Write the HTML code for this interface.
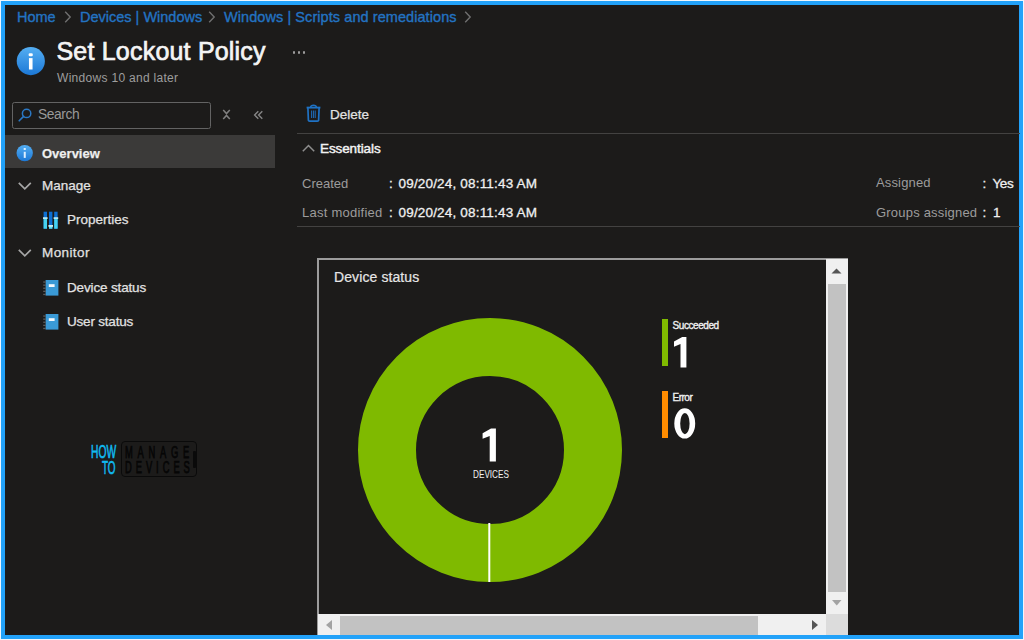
<!DOCTYPE html>
<html><head><meta charset="utf-8">
<style>
*{margin:0;padding:0;box-sizing:border-box}
html,body{width:1024px;height:640px;overflow:hidden;background:#eef6fd}
body{font-family:"Liberation Sans",sans-serif;position:relative}
#frame{position:absolute;left:1px;top:0.6px;width:1022px;height:638.4px;background:#22a2f9}
#app{position:absolute;left:5px;top:5px;width:1014px;height:630px;background:#1c1b1a}
.a{position:absolute;white-space:nowrap;line-height:1}
.bc{color:#2373c2;font-size:14.5px;-webkit-text-stroke:0.35px #2373c2}
.nav{color:#e2e2e2;font-size:13.5px;-webkit-text-stroke:0.25px #e2e2e2}
.lbl{color:#9c9c9c;font-size:13px}
.val{color:#f0f0f0;font-size:13.5px;-webkit-text-stroke:0.3px #f0f0f0;letter-spacing:0.05px}
svg{position:absolute;overflow:visible}
</style></head><body>
<div id="frame"></div>
<div id="app"></div>

<!-- breadcrumb -->
<div class="a bc" style="left:17px;top:10px">Home</div>
<svg style="left:64px;top:11px" width="8" height="12"><path d="M1.2 0.8 L6.2 6 L1.2 11.2" fill="none" stroke="#707070" stroke-width="1.4"/></svg>
<div class="a bc" style="left:80px;top:10px">Devices | Windows</div>
<svg style="left:208px;top:11px" width="8" height="12"><path d="M1.2 0.8 L6.2 6 L1.2 11.2" fill="none" stroke="#707070" stroke-width="1.4"/></svg>
<div class="a bc" style="left:224px;top:10px;letter-spacing:0.07px">Windows | Scripts and remediations</div>
<svg style="left:464px;top:11px" width="8" height="12"><path d="M1.2 0.8 L6.2 6 L1.2 11.2" fill="none" stroke="#707070" stroke-width="1.4"/></svg>

<!-- title -->
<svg style="left:16px;top:47px" width="29" height="29">
  <defs><linearGradient id="ig" x1="0" y1="0" x2="0" y2="1"><stop offset="0" stop-color="#54aef2"/><stop offset="1" stop-color="#1c78d6"/></linearGradient></defs>
  <circle cx="14.8" cy="14.1" r="14.1" fill="url(#ig)"/>
  <rect x="12.6" y="6.2" width="4.2" height="3" rx="1.3" fill="#fff"/>
  <rect x="12.95" y="11.1" width="3.6" height="11.4" fill="#fff"/>
</svg>
<div class="a" style="left:56.5px;top:39px;font-size:25px;color:#f4f4f4;letter-spacing:0.2px;-webkit-text-stroke:0.7px #f4f4f4">Set Lockout Policy</div>
<div class="a" style="left:293px;top:51.4px;width:13px;height:3px">
  <span style="position:absolute;left:0;top:0;width:2.2px;height:2.2px;border-radius:1px;background:#9c9c9c"></span>
  <span style="position:absolute;left:5px;top:0;width:2.2px;height:2.2px;border-radius:1px;background:#9c9c9c"></span>
  <span style="position:absolute;left:10px;top:0;width:2.2px;height:2.2px;border-radius:1px;background:#9c9c9c"></span>
</div>
<div class="a" style="left:57px;top:72px;font-size:12px;color:#9e9e9e;letter-spacing:0.3px">Windows 10 and later</div>

<!-- search -->
<div class="a" style="left:11.5px;top:101.5px;width:199px;height:27px;border:1.6px solid #636363;border-radius:2.5px"></div>
<svg style="left:18px;top:108px" width="14" height="14"><circle cx="8.6" cy="5.4" r="4.2" fill="none" stroke="#2a78c4" stroke-width="1.5"/><path d="M5.6 8.4 L1.2 12.8" stroke="#2a78c4" stroke-width="1.6" stroke-linecap="round"/></svg>
<div class="a lbl" style="left:38px;top:107.6px;font-size:13.8px;letter-spacing:-0.4px;color:#999">Search</div>
<svg style="left:222px;top:109px" width="9" height="11"><path d="M1.2 1 L4.5 4.6 L7.8 1 M1.2 10 L4.5 6.4 L7.8 10" fill="none" stroke="#808080" stroke-width="1.5"/></svg>
<svg style="left:253px;top:110px" width="11" height="10"><path d="M5.3 1.2 L1.6 5 L5.3 8.8 M9.3 1.2 L5.6 5 L9.3 8.8" fill="none" stroke="#858585" stroke-width="1.4"/></svg>

<!-- nav -->
<div class="a" style="left:5px;top:135px;width:270px;height:33px;background:#3b3a39"></div>
<svg style="left:16px;top:145px" width="17" height="17">
  <circle cx="8.7" cy="8.1" r="8.2" fill="url(#ig)"/>
  <rect x="7.5" y="3.1" width="2.5" height="1.9" rx="0.9" fill="#dcefff"/>
  <rect x="7.75" y="6.8" width="2" height="6.1" fill="#dcefff"/>
</svg>
<div class="a nav" style="left:42px;top:146.5px;font-size:13px;font-weight:bold;color:#f2f2f2">Overview</div>

<svg style="left:18px;top:182px" width="14" height="8"><path d="M0.8 0.8 L6.8 6.8 L12.8 0.8" fill="none" stroke="#a6a6a6" stroke-width="1.7"/></svg>
<div class="a nav" style="left:42px;top:178.6px">Manage</div>

<svg style="left:43px;top:211px" width="16" height="18">
  <rect x="0.6" y="0.7" width="3.4" height="17" fill="#0d6fd2"/>
  <rect x="6" y="0.7" width="3.4" height="17" fill="#0d6fd2"/>
  <rect x="11.2" y="0.7" width="3.4" height="17" fill="#0d6fd2"/>
  <rect x="0.6" y="7.5" width="3.4" height="10.2" fill="#46d2ee"/>
  <rect x="6" y="15" width="3.4" height="2.7" fill="#5fe0f0"/>
  <rect x="11.2" y="7.5" width="3.4" height="10.2" fill="#46d2ee"/>
  <rect x="0" y="6.2" width="4.6" height="1.8" fill="#b4e8f6"/>
  <rect x="5.4" y="14" width="4.6" height="1.8" fill="#c8eef6"/>
  <rect x="10.6" y="6.2" width="4.6" height="1.8" fill="#b4e8f6"/>
</svg>
<div class="a nav" style="left:67px;top:212.6px">Properties</div>

<svg style="left:18px;top:249px" width="14" height="8"><path d="M0.8 0.8 L6.8 6.8 L12.8 0.8" fill="none" stroke="#a6a6a6" stroke-width="1.7"/></svg>
<div class="a nav" style="left:42px;top:246.2px;letter-spacing:0.4px">Monitor</div>

<svg style="left:43px;top:280px" width="16" height="16">
  <rect x="2.6" y="0" width="12.8" height="15.6" fill="#3a9ad6"/>
  <rect x="0.2" y="1.4" width="2.6" height="1.3" fill="#5c5c5c"/><rect x="0.2" y="4.5" width="2.6" height="1.3" fill="#5c5c5c"/><rect x="0.2" y="7.6" width="2.6" height="1.3" fill="#5c5c5c"/><rect x="0.2" y="10.7" width="2.6" height="1.3" fill="#5c5c5c"/><rect x="0.2" y="13.8" width="2.6" height="1.3" fill="#5c5c5c"/>
  <rect x="5.8" y="4.2" width="5.8" height="2.8" fill="#f4f9fd"/>
</svg>
<div class="a nav" style="left:67px;top:280.6px;letter-spacing:-0.15px">Device status</div>

<svg style="left:43px;top:314px" width="16" height="16">
  <rect x="2.6" y="0" width="12.8" height="15.6" fill="#3a9ad6"/>
  <rect x="0.2" y="1.4" width="2.6" height="1.3" fill="#5c5c5c"/><rect x="0.2" y="4.5" width="2.6" height="1.3" fill="#5c5c5c"/><rect x="0.2" y="7.6" width="2.6" height="1.3" fill="#5c5c5c"/><rect x="0.2" y="10.7" width="2.6" height="1.3" fill="#5c5c5c"/><rect x="0.2" y="13.8" width="2.6" height="1.3" fill="#5c5c5c"/>
  <rect x="5.8" y="4.2" width="5.8" height="2.8" fill="#f4f9fd"/>
</svg>
<div class="a nav" style="left:67px;top:314.9px;letter-spacing:-0.2px">User status</div>

<!-- watermark logo -->
<div class="a" style="left:90.5px;top:443px;font-size:18px;color:#10bcf2;transform-origin:0 0;transform:scaleX(0.57);-webkit-text-stroke:0.6px #10bcf2">HOW</div>
<div class="a" style="left:102px;top:458.6px;font-size:18px;color:#10bcf2;transform-origin:0 0;transform:scaleX(0.55);-webkit-text-stroke:0.6px #10bcf2">TO</div>
<div class="a" style="left:121px;top:441px;width:76px;height:36px;border:1.6px solid #0a0a0a;border-radius:4px"></div>
<div class="a" style="left:193px;top:450.5px;width:3.2px;height:17px;background:#0a0a0a;border-radius:1px"></div>
<div class="a" style="left:125px;top:443.8px;font-size:17px;color:#060606;letter-spacing:8.6px;transform-origin:0 0;transform:scaleX(0.55);-webkit-text-stroke:0.75px #060606">MANAGE</div>
<div class="a" style="left:125px;top:459px;font-size:17px;color:#060606;letter-spacing:7.2px;transform-origin:0 0;transform:scaleX(0.55);-webkit-text-stroke:0.75px #060606">DEVICES</div>

<!-- command bar -->
<svg style="left:306px;top:104px" width="15" height="19">
  <path d="M4.6 3.2 Q4.8 1.2 7.5 1.2 Q10.2 1.2 10.4 3.2" fill="none" stroke="#1f72c4" stroke-width="1.5"/>
  <path d="M0.6 3.6 L14.4 3.6" stroke="#1f72c4" stroke-width="1.9"/>
  <path d="M1.9 4 L2.4 16.4 Q2.5 17.1 3.6 17.1 L11.4 17.1 Q12.5 17.1 12.6 16.4 L13.1 4" fill="none" stroke="#1f72c4" stroke-width="1.7"/>
  <path d="M5.6 6.5 V14 M7.4 6.5 V14 M9.2 6.5 V14" stroke="#1f72c4" stroke-width="0.95"/>
</svg>
<div class="a nav" style="left:330px;top:108px">Delete</div>
<div class="a" style="left:296.5px;top:132.8px;width:723px;height:1.4px;background:#434241"></div>

<svg style="left:302px;top:144px" width="13" height="8"><path d="M0.8 7.2 L6.5 1.5 L12.2 7.2" fill="none" stroke="#8e8e8e" stroke-width="1.5"/></svg>
<div class="a" style="left:320px;top:142.2px;font-size:13.5px;color:#f2f2f2;letter-spacing:-0.1px;-webkit-text-stroke:0.45px #f2f2f2">Essentials</div>

<div class="a lbl" style="left:302px;top:176.8px">Created</div>
<div class="a val" style="left:389px;top:176.5px">:</div><div class="a val" style="left:398.5px;top:176.5px;letter-spacing:0.18px">09/20/24, 08:11:43 AM</div>
<div class="a lbl" style="left:302px;top:205.9px;letter-spacing:0.25px">Last modified</div>
<div class="a val" style="left:389px;top:205.5px">:</div><div class="a val" style="left:398.5px;top:205.5px;letter-spacing:0.18px">09/20/24, 08:11:43 AM</div>
<div class="a lbl" style="left:876px;top:176.4px;letter-spacing:0.15px">Assigned</div>
<div class="a val" style="left:982.5px;top:176.5px">:</div><div class="a val" style="left:992.5px;top:176.5px;letter-spacing:-0.4px">Yes</div>
<div class="a lbl" style="left:876px;top:206px;letter-spacing:0.2px">Groups assigned</div>
<div class="a val" style="left:982.5px;top:205.5px">:</div><div class="a val" style="left:993px;top:205.5px">1</div>
<div class="a" style="left:296.5px;top:225.8px;width:723px;height:1.4px;background:#434241"></div>

<!-- chart panel -->
<div class="a" style="left:317px;top:258px;width:531px;height:377px;border-left:2px solid #9c9c9c;border-top:2px solid #9c9c9c"></div>
<div class="a" style="left:334px;top:269.5px;font-size:14px;color:#e6e6e6;letter-spacing:0.1px;-webkit-text-stroke:0.2px #e6e6e6">Device status</div>

<svg style="left:0;top:0" width="1024" height="640">
  <circle cx="490" cy="450" r="103" fill="none" stroke="#7fba00" stroke-width="58"/>
  <path d="M489.3 523 V582" stroke="#ffffff" stroke-width="2"/>
</svg>
<svg style="left:0;top:0" width="1024" height="640">
  <path d="M495.9 428.5 L495.9 461.6 L489.7 461.6 L489.7 436 L482.6 438.8 L482.6 433.2 L491 428.5 Z" fill="#fff"/>
  <path d="M686.4 337 L686.4 367.6 L680.5 367.6 L680.5 344 L674 346.8 L674 341.4 L682.2 337 Z" fill="#fff"/>
  <path fill-rule="evenodd" fill="#fff" d="M684.75 408.3 A10.45 15.15 0 1 1 684.75 438.6 A10.45 15.15 0 1 1 684.75 408.3 Z M684.9 412.9 A4.7 10.65 0 1 0 684.9 434.2 A4.7 10.65 0 1 0 684.9 412.9 Z"/>
</svg>
<div class="a" style="left:472.5px;top:468.5px;font-size:10.5px;color:#f0f0f0;transform-origin:0 0;transform:scaleX(0.78)">DEVICES</div>

<div class="a" style="left:662px;top:319px;width:5.5px;height:47px;background:#7fba00"></div>
<div class="a" style="left:672.5px;top:321px;font-size:10px;color:#f0f0f0;letter-spacing:-0.42px;-webkit-text-stroke:0.35px #f0f0f0">Succeeded</div>
<div class="a" style="left:662px;top:390.5px;width:5.5px;height:47px;background:#ff8c00"></div>
<div class="a" style="left:672.5px;top:392.8px;font-size:10px;color:#f0f0f0;letter-spacing:-0.5px;-webkit-text-stroke:0.35px #f0f0f0">Error</div>

<!-- scrollbars -->
<div class="a" style="left:826px;top:259px;width:22px;height:355px;background:#f0f0f0"></div>
<div class="a" style="left:828px;top:284px;width:18px;height:308px;background:#c2c2c2"></div>
<svg style="left:831px;top:268px" width="11" height="6"><path d="M0.5 5.5 L5.5 0.5 L10.5 5.5 Z" fill="#555"/></svg>
<svg style="left:832px;top:600px" width="10" height="6"><path d="M0 0 L9.5 0 L4.75 5.5 Z" fill="#a3a3a3"/></svg>
<div class="a" style="left:318px;top:614px;width:508px;height:21px;background:#f0f0f0"></div>
<div class="a" style="left:340px;top:616px;width:418px;height:19px;background:#c2c2c2"></div>
<svg style="left:326px;top:620px" width="6" height="10"><path d="M6 0 L6 10 L0 5 Z" fill="#a3a3a3"/></svg>
<svg style="left:812px;top:620px" width="6" height="10"><path d="M0 0 L0 10 L6 5 Z" fill="#555"/></svg>
<div class="a" style="left:826px;top:614px;width:22px;height:21px;background:#dcdcdc"></div>
</body></html>
